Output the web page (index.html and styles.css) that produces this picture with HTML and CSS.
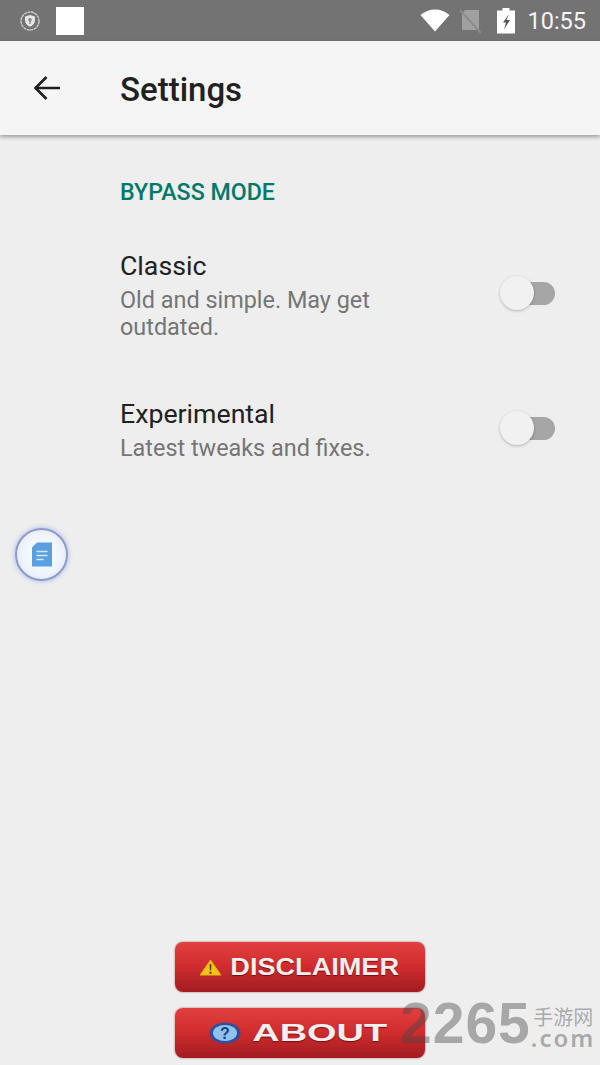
FILE: index.html
```html
<!DOCTYPE html>
<html lang="en">
<head>
<meta charset="utf-8">
<title>Settings</title>
<link rel="stylesheet" href="styles.css">
</head>
<body>
<div class="screen">
  <header class="status">
    <div class="status-left">
      <svg class="shield" viewBox="0 0 20 20" width="20" height="20"><circle cx="10" cy="10" r="9" fill="none" stroke="#cfcfcf" stroke-width="1.4" stroke-dasharray="3 .6"/><path d="M10 4l5 1.6v4c0 3-2.2 5-5 6.2-2.8-1.2-5-3.2-5-6.2v-4z" fill="#e6e6e6"/><circle cx="10" cy="8.8" r="1.8" fill="#8a8a8a"/><rect x="9.3" y="9.5" width="1.4" height="3.5" fill="#8a8a8a"/></svg>
      <div class="white-box"></div>
    </div>
    <div class="status-right">
      <svg class="wifi" viewBox="0 0 30 23" width="30" height="23"><path d="M15 22.500L.5 6C4.500 2.500 9.500.5 15 .5S25.500 2.500 29.500 6z" fill="#fff"/></svg>
      <svg class="nosim" viewBox="0 0 24 26" width="24" height="26"><path d="M7 2h14v20H4V6z" fill="#a0a0a0"/><path d="M2 2l21 23" stroke="#8b8b8b" stroke-width="2"/></svg>
      <svg class="battery" viewBox="0 0 18 26" width="18" height="26"><path d="M5.500 0h7v2.500H18V25.500H0V2.500h5.500z" fill="#fff"/><path d="M12 6l-6 8.500h3L7 21.500l6-9.500H9.500z" fill="#555"/></svg>
      <span class="clock">10:55</span>
    </div>
  </header>

  <nav class="toolbar">
    <svg class="back" viewBox="0 0 28 26" width="28" height="26"><path d="M27 13H3M13.500 2L2.500 13l11 11" fill="none" stroke="#212121" stroke-width="2.6"/></svg>
    <h1 class="title">Settings</h1>
  </nav>

  <main class="content">
    <h2 class="section">BYPASS MODE</h2>
    <div class="row row-first">
      <div class="row-text">
        <div class="row-title">Classic</div>
        <div class="row-sub">Old and simple. May get outdated.</div>
      </div>
      <div class="switch"><span class="thumb"></span></div>
    </div>
    <div class="row row-second">
      <div class="row-text">
        <div class="row-title">Experimental</div>
        <div class="row-sub">Latest tweaks and fixes.</div>
      </div>
      <div class="switch"><span class="thumb"></span></div>
    </div>
  </main>

  <footer class="actions">
    <button class="red-btn btn-disclaimer">
      <svg viewBox="0 0 24 18" width="23" height="17"><path d="M12 1l11 16H1z" fill="#f2c21c" stroke="#e8b010" stroke-width="1"/><path d="M11 5.500h2l-.4 6.500h-1.200zM11 13.500h2v2h-2z" fill="#4a3a10"/></svg>
      <span class="label label-disclaimer">DISCLAIMER</span>
    </button>
    <button class="red-btn btn-about">
      <svg viewBox="0 0 32 22" width="32" height="22"><ellipse cx="16" cy="11" rx="15.500" ry="10.500" fill="#2f4f9e"/><ellipse cx="16" cy="11" rx="12" ry="8" fill="#8ec3ee"/><text x="16" y="16.500" class="q">?</text></svg>
      <span class="label label-about">ABOUT</span>
    </button>
  </footer>

  <div class="bubble">
    <svg viewBox="0 0 20 24" width="20" height="25"><path d="M5 0h15v24H0V5z" fill="#5a9fe0"/><path d="M4.500 9h11M4.500 13h11M4.500 17h7" stroke="#d6e8f8" stroke-width="1.6"/></svg>
  </div>

  <div class="watermark">
    <span class="wm-num">2265</span>
    <div class="wm-side">
      <span class="wm-cn">手游网</span>
      <span class="wm-com">.com</span>
    </div>
  </div>
</div>
</body>
</html>
```
FILE: styles.css
```css
* { box-sizing: border-box; }
html, body { margin: 0; padding: 0; }
body { font-family: Roboto, "Noto Sans", sans-serif; background: #eeeeee; }

.screen {
  position: relative;
  width: 600px;
  height: 1065px;
  overflow: hidden;
  display: flex;
  flex-direction: column;
  background: #eeeeee;
}

.status {
  flex: none;
  height: 41px;
  background: #737373;
  display: flex;
  align-items: center;
  justify-content: space-between;
  padding: 0 14px 0 20px;
}
.status-left { display: flex; align-items: center; gap: 16px; }
.white-box { width: 28px; height: 28px; background: #ffffff; }
.status-right { display: flex; align-items: center; }
.wifi { margin-right: 8px; }
.nosim { margin-right: 15px; }
.battery { margin-right: 12px; }
.clock { color: #f5f5f5; font-size: 23.5px; line-height: 26px; }

.toolbar {
  flex: none;
  height: 94px;
  background: #f5f5f5;
  display: flex;
  align-items: center;
  padding-left: 33px;
  box-shadow: 0 2px 4px rgba(0, 0, 0, .35);
  position: relative;
}
.back { margin-right: 59px; }
.title { margin: 3px 0 0; font-size: 33px; font-weight: 500; color: #212121; line-height: 40px; }

.content { flex: 1; padding: 44px 45px 0 120px; }
.section { margin: 0; font-size: 23.2px; font-weight: 500; line-height: 27px; color: #00796b; }

.row { display: flex; align-items: center; justify-content: space-between; }
.row-first { margin-top: 45px; }
.row-second { margin-top: 58px; }
.row-text { width: 290px; }
.row-title { font-size: 26.7px; line-height: 31px; color: #212121; }
.row-sub { font-size: 23.4px; line-height: 27px; color: #757575; margin-top: 5px; }

.switch {
  position: relative;
  width: 50px;
  height: 23px;
  margin-top: -5px;
  border-radius: 12px;
  background: #a6a6a6;
}
.thumb {
  position: absolute;
  left: -5px;
  top: -6px;
  width: 34px;
  height: 34px;
  border-radius: 50%;
  background: #f1f1f1;
  box-shadow: 0 1px 3px rgba(0, 0, 0, .25);
}

.actions {
  flex: none;
  display: flex;
  flex-direction: column;
  align-items: center;
  gap: 16px;
  padding-bottom: 7px;
}
.red-btn {
  width: 250px;
  height: 50px;
  display: flex;
  align-items: center;
  justify-content: center;
  border: 0;
  padding: 0;
  border-radius: 8px;
  background: linear-gradient(#e04040 0%, #d32d2f 45%, #a11c20 100%);
  box-shadow: 0 0 2px rgba(120, 20, 20, .7);
  font-family: "Liberation Sans", Arial, sans-serif;
  font-weight: 700;
  font-size: 24px;
  color: #f4eeee;
  text-shadow: 0 1px 1px rgba(90, 0, 0, .7);
}
.btn-disclaimer { gap: 8px; padding-right: 2px; }
.btn-about { gap: 11px; padding-right: 3px; }
.label { display: inline-block; }
.label-disclaimer { transform: scaleX(1.13); margin: 0 9.5px; }
.label-about { transform: scaleX(1.58); margin: 0 25px; }
.q { font: 700 16px "Liberation Sans", sans-serif; fill: #1f3f80; text-anchor: middle; text-shadow: none; }

.bubble {
  position: absolute;
  left: 15px;
  top: 528px;
  width: 53px;
  height: 53px;
  border-radius: 50%;
  display: flex;
  align-items: center;
  justify-content: center;
  background: radial-gradient(circle, #ffffff 0%, #f0f4fc 55%, #d6e2fa 100%);
  border: 2px solid #9098c8;
  box-shadow: 0 0 5px rgba(110, 160, 240, .7);
}

.watermark {
  position: absolute;
  left: 400px;
  top: 992px;
  display: flex;
  align-items: flex-end;
  color: rgba(70, 70, 70, .42);
  pointer-events: none;
}
.wm-num {
  font-family: "Liberation Sans", Arial, sans-serif;
  font-weight: 700;
  font-size: 57px;
  line-height: 62px;
  letter-spacing: 1px;
}
.wm-side { display: flex; flex-direction: column; align-items: flex-end; padding-bottom: 6px; }
.wm-cn { font-family: "Noto Sans CJK SC", sans-serif; font-size: 20px; line-height: 22px; }
.wm-com { font-family: "Noto Sans", sans-serif; font-weight: 600; font-size: 24px; line-height: 20px; letter-spacing: 2px; margin-right: -2px; }
```
